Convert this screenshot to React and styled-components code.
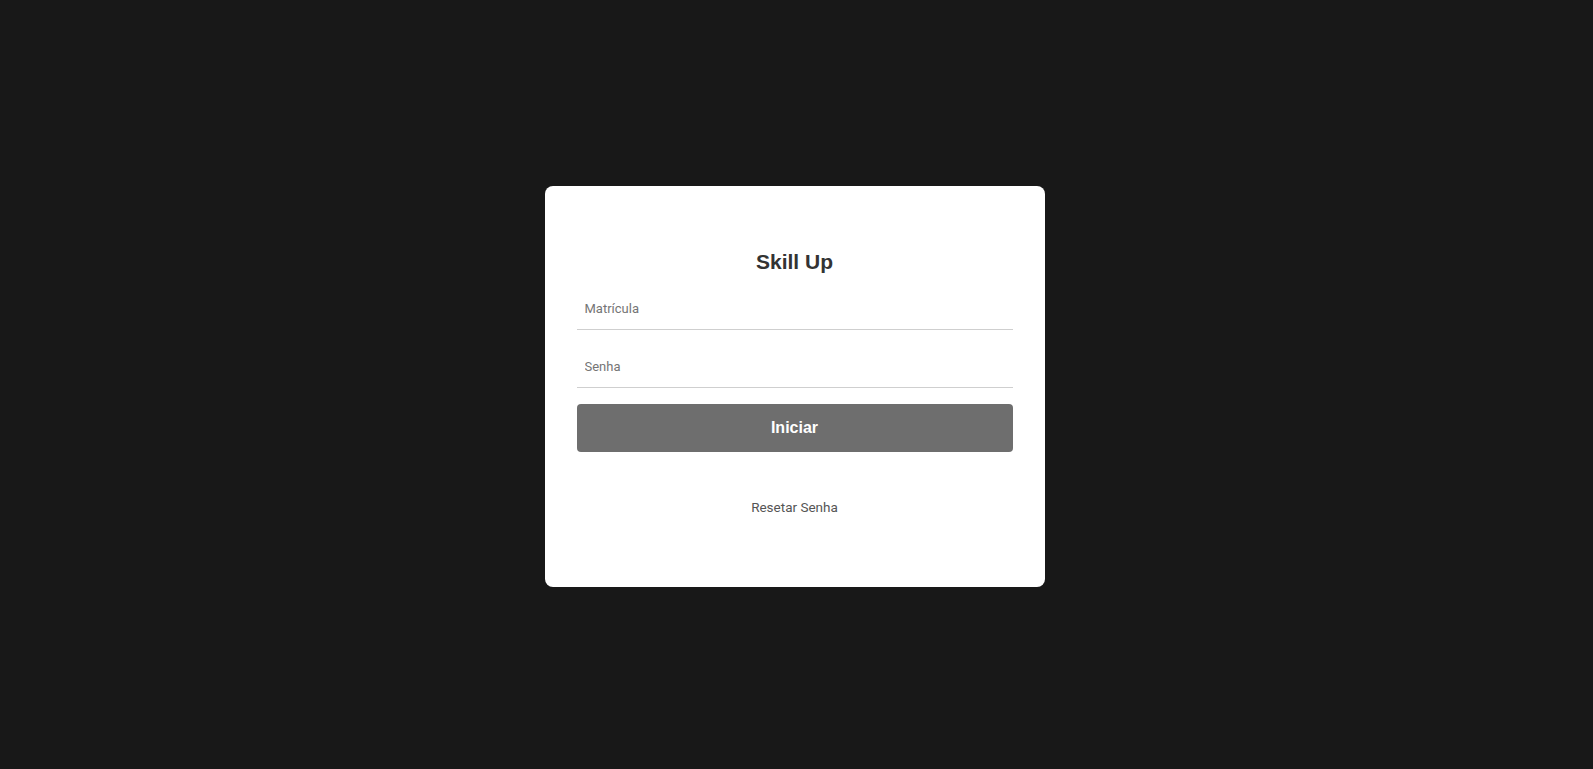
import styled, { createGlobalStyle } from "styled-components";

const GlobalStyle = createGlobalStyle`
  html, body {
    margin: 0;
    padding: 0;
    background: #181818;
  }
  * {
    box-sizing: border-box;
  }
`;

const Page = styled.main`
  width: 100%;
  height: 100vh;
  display: flex;
  justify-content: center;
  align-items: center;
  padding: 3px 4px 0 0;
  background: #181818;
`;

const Card = styled.form`
  width: 500px;
  height: 401px;
  padding: 64px 32px 0;
  display: flex;
  flex-direction: column;
  background: #fff;
  border-radius: 8px;
`;

const Title = styled.h2`
  margin: 0 0 14px;
  text-align: center;
  font-family: "Liberation Sans", Arial, sans-serif;
  font-size: 21px;
  line-height: 24px;
  font-weight: 700;
  color: #333;
`;

const Field = styled.input`
  width: 100%;
  height: 42px;
  margin-bottom: ${(p) => p.$gap || 0}px;
  padding: 0 8px;
  border: none;
  border-bottom: 1px solid #cfcfcf;
  outline: none;
  font-family: Roboto, "Liberation Sans", sans-serif;
  font-size: 13px;
  color: #333;

  &::placeholder {
    color: #757575;
  }
`;

const Button = styled.button`
  width: 100%;
  height: 48px;
  margin-top: 16px;
  border: none;
  border-radius: 4px;
  background: #6e6e6e;
  color: #fff;
  font-family: "Liberation Sans", Arial, sans-serif;
  font-size: 16px;
  font-weight: 700;
  cursor: pointer;
`;

const ResetLink = styled.a`
  margin-top: 48px;
  align-self: center;
  font-family: Roboto, "Liberation Sans", sans-serif;
  font-size: 13.5px;
  line-height: 15px;
  color: #555;
  text-decoration: none;
  cursor: pointer;
`;

const App = () => {
  return (
    <>
      <GlobalStyle />
      <Page>
        <Card onSubmit={(e) => e.preventDefault()}>
          <Title>Skill Up</Title>
          <Field type="text" placeholder="Matrícula" $gap={16} />
          <Field type="password" placeholder="Senha" />
          <Button type="submit">Iniciar</Button>
          <ResetLink>Resetar Senha</ResetLink>
        </Card>
      </Page>
    </>
  );
};

export default App;
